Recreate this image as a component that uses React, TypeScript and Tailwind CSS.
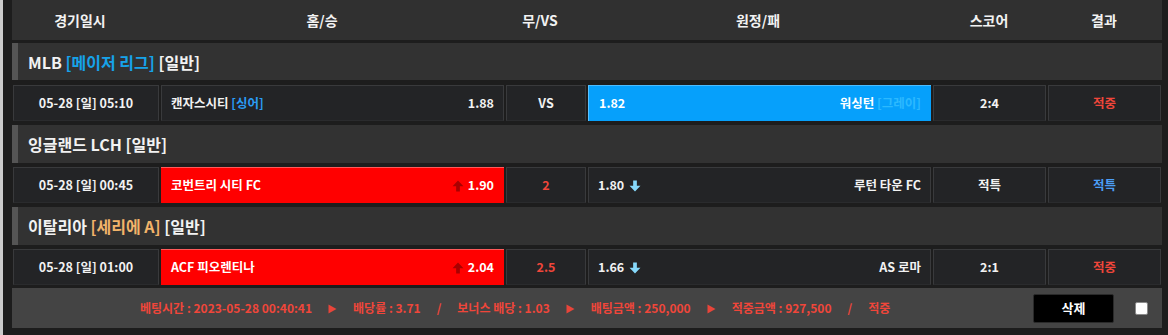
import React from "react";

const FONT = { fontFamily: '"Noto Sans CJK KR", "Noto Sans", sans-serif' } as React.CSSProperties;

function UpArrow() {
  return (
    <svg width="12" height="12" viewBox="0 0 11 11" className="mr-[4px] mt-[1px]">
      <path d="M5.5 0.5 L10.5 5.8 L7.2 5.8 L7.2 10.5 L3.8 10.5 L3.8 5.8 L0.5 5.8 Z" fill="#a80000" />
    </svg>
  );
}

function DownArrow() {
  return (
    <svg width="12" height="12" viewBox="0 0 11 11" className="ml-[5px] mt-[1px]">
      <path d="M5.5 10.5 L10.5 5.2 L7.2 5.2 L7.2 0.5 L3.8 0.5 L3.8 5.2 L0.5 5.2 Z" fill="#86d9fb" />
    </svg>
  );
}

function Tri() {
  return (
    <svg width="9" height="10" viewBox="0 0 9 10" className="mt-[2px]">
      <path d="M0.5 0.5 L8.5 5 L0.5 9.5 Z" fill="#e8453a" />
    </svg>
  );
}

const cell = "border border-[#393a3c] border-b-[#2a2b2d] bg-[#232426] flex items-center text-[12.5px] font-bold text-[#f2f2f2]";

type Match = {
  date: string;
  home: React.ReactNode;
  homeOdds: string;
  homeSel?: boolean;
  draw: React.ReactNode;
  away: React.ReactNode;
  awayOdds: string;
  awaySel?: boolean;
  awayDown?: boolean;
  score: React.ReactNode;
  result: React.ReactNode;
};

function MatchRow({ m, className }: { m: Match; className?: string }) {
  return (
    <div className={"flex h-[36px] ml-[1px] mr-[1px] gap-[2px] " + (className ?? "")}>
      <div className={cell + " w-[146px] justify-center"}>{m.date}</div>
      <div
        className={
          m.homeSel
            ? "w-[343px] flex items-center justify-between px-[10px] bg-[#ff0000] border-t border-t-[#ff5a5a] text-[12.5px] font-bold text-white"
            : cell + " w-[343px] justify-between px-[9px]"
        }
      >
        <span>{m.home}</span>
        <span className="flex items-center">
          {m.homeSel && <UpArrow />}
          {m.homeOdds}
        </span>
      </div>
      <div className={cell + " w-[80px] justify-center"}>{m.draw}</div>
      <div
        className={
          m.awaySel
            ? "w-[343px] flex items-center justify-between px-[10px] bg-[#06a0fb] border-t border-t-[#4cbcff] border-l border-l-[#5bc2ff] text-[12.5px] font-bold text-white"
            : cell + " w-[343px] justify-between px-[9px]"
        }
      >
        <span className="flex items-center">
          {m.awayOdds}
          {m.awayDown && <DownArrow />}
        </span>
        <span>{m.away}</span>
      </div>
      <div className={cell + " w-[113px] justify-center"}>{m.score}</div>
      <div className={cell + " w-[113px] justify-center"}>{m.result}</div>
    </div>
  );
}

function League({ children, className }: { children: React.ReactNode; className?: string }) {
  return (
    <div className={"flex bg-[#323232] " + (className ?? "")}>
      <div className="w-[6px] bg-[#555555]" />
      <div className="flex items-center pl-[10px] text-[16px] font-bold text-[#f2f2f2]">{children}</div>
    </div>
  );
}

export default function App() {
  const red = "text-[#f0463a]";
  return (
    <div className="flex h-[335px] w-[1168px] overflow-hidden bg-[#1d1d1d]" style={FONT}>
      <div className="w-[3px] bg-[#cbcbcb]" />
      <div className="flex flex-col w-[1150px] ml-[9px]">
        {/* header */}
        <div className="flex h-[40px] bg-[#303030] text-[14px] font-bold text-[#f2f2f2]">
          <div className="w-[136px] flex items-center justify-center">경기일시</div>
          <div className="w-[348px] flex items-center justify-center">홈/승</div>
          <div className="w-[88px] flex items-center justify-center">무/VS</div>
          <div className="w-[348px] flex items-center justify-center">원정/패</div>
          <div className="w-[114px] flex items-center justify-center">스코어</div>
          <div className="w-[116px] flex items-center justify-center">결과</div>
        </div>

        <League className="h-[37px] mt-[3px]">
          MLB&nbsp;<span className="text-[#16a3ea]">[메이저 리그]</span>&nbsp;[일반]
        </League>
        <MatchRow
          className="mt-[5px]"
          m={{
            date: "05-28 [일] 05:10",
            home: (
              <>
                캔자스시티 <span className="text-[#2a9cf5]">[싱어]</span>
              </>
            ),
            homeOdds: "1.88",
            draw: "VS",
            awayOdds: "1.82",
            awaySel: true,
            away: (
              <>
                워싱턴 <span className="text-[#2cb9ff]">[그레이]</span>
              </>
            ),
            score: "2:4",
            result: <span className={red}>적중</span>,
          }}
        />

        <League className="h-[38px] mt-[4px]">잉글랜드 LCH [일반]</League>
        <MatchRow
          className="mt-[4px]"
          m={{
            date: "05-28 [일] 00:45",
            home: "코번트리 시티 FC",
            homeOdds: "1.90",
            homeSel: true,
            draw: <span className={red}>2</span>,
            awayOdds: "1.80",
            awayDown: true,
            away: "루턴 타운 FC",
            score: "적특",
            result: <span className="text-[#4c9ef5]">적특</span>,
          }}
        />

        <League className="h-[38px] mt-[4px]">
          이탈리아&nbsp;<span className="text-[#f2b46a]">[세리에 A]</span>&nbsp;[일반]
        </League>
        <MatchRow
          className="mt-[4px]"
          m={{
            date: "05-28 [일] 01:00",
            home: "ACF 피오렌티나",
            homeOdds: "2.04",
            homeSel: true,
            draw: <span className={red}>2.5</span>,
            awayOdds: "1.66",
            awayDown: true,
            away: "AS 로마",
            score: "2:1",
            result: <span className={red}>적중</span>,
          }}
        />

        {/* footer */}
        <div className="flex items-center h-[40px] mt-[3px] bg-[#444444]">
          <div className={"flex items-center gap-[16px] ml-[128px] text-[12px] font-bold " + red}>
            <span>베팅시간 : 2023-05-28 00:40:41</span>
            <Tri />
            <span>배당률 : 3.71</span>
            <span>/</span>
            <span>보너스 배당 : 1.03</span>
            <Tri />
            <span>배팅금액 : 250,000</span>
            <Tri />
            <span>적중금액 : 927,500</span>
            <span>/</span>
            <span>적중</span>
          </div>
          <div className="ml-auto flex items-center">
            <button className="w-[81px] h-[29px] bg-black rounded-[2px] border border-[#2a2a2a] text-[13px] font-bold text-white">
              삭제
            </button>
            <div className="w-[13px] h-[13px] bg-white rounded-[2px] border border-[#8a8a8a] ml-[21px] mr-[14px]" />
          </div>
        </div>
      </div>
    </div>
  );
}
